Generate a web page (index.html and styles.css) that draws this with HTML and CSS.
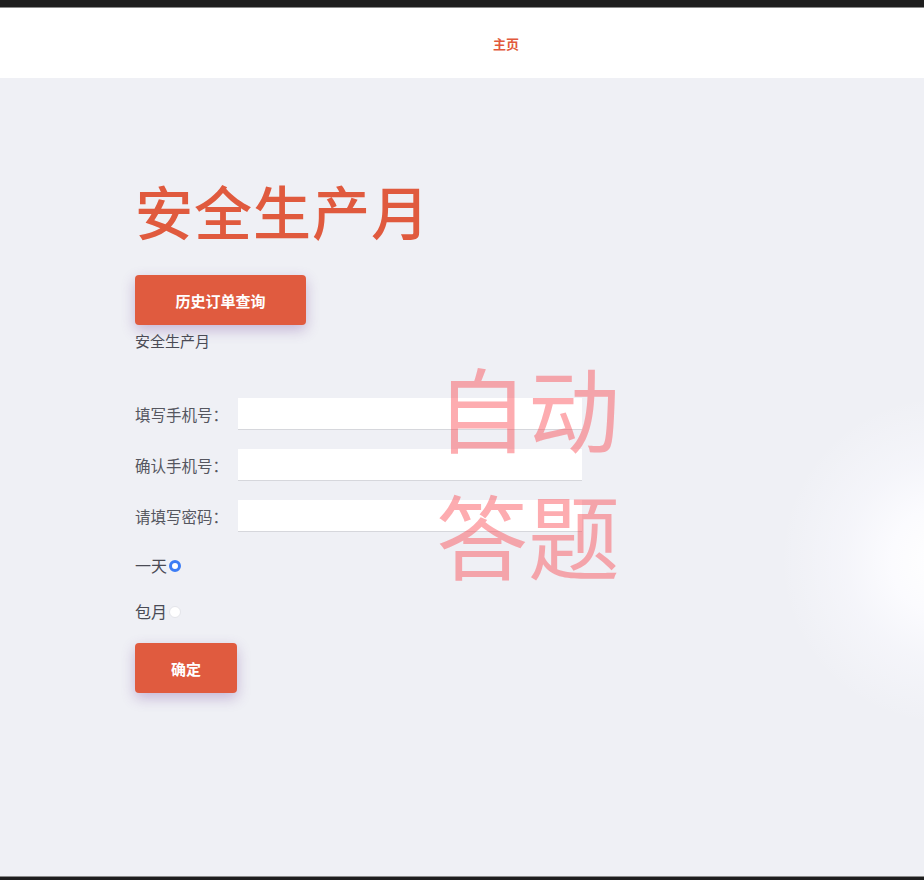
FILE: index.html
```html
<!DOCTYPE html>
<html lang="zh-CN">
<head>
<meta charset="utf-8">
<title>安全生产月</title>
<link rel="stylesheet" href="styles.css">
</head>
<body>
<div class="topbar"></div>
<header class="header">
  <a class="nav-link">主页</a>
</header>
<main class="main">
  <h1 class="title">安全生产月</h1>
  <button class="btn btn-wide">历史订单查询</button>
  <p class="subtitle">安全生产月</p>
  <form class="form">
    <div class="row">
      <label class="label">填写手机号：</label>
      <input class="input" type="text">
    </div>
    <div class="row">
      <label class="label">确认手机号：</label>
      <input class="input" type="text">
    </div>
    <div class="row">
      <label class="label">请填写密码：</label>
      <input class="input" type="password">
    </div>
    <label class="radio-row radio-first">一天<input class="radio" type="radio" name="plan" checked></label>
    <label class="radio-row">包月<input class="radio" type="radio" name="plan"></label>
    <button class="btn btn-small" type="button">确定</button>
  </form>
  <div class="overlay">自动<br>答题</div>
</main>
<div class="bottombar"></div>
</body>
</html>
```

FILE: styles.css
```css
* { box-sizing: border-box; }
html, body { margin: 0; padding: 0; }
body {
  font-family: "Noto Sans CJK SC", "Noto Sans", sans-serif;
  background: #eff0f5;
  width: 924px;
  height: 880px;
  overflow: hidden;
}
.topbar {
  height: 8px;
  background: #1e1e1e;
  border-bottom: 1px solid #8a8a8a;
}
.header {
  height: 70px;
  background: #fff;
  display: flex;
  align-items: center;
  justify-content: center;
  padding-left: 88px;
}
.nav-link {
  color: #e2593c;
  font-size: 13px;
  font-weight: 700;
}
.main {
  position: relative;
  height: 798px;
  padding: 97px 0 0 135px;
  background:
    radial-gradient(circle at 945px 482px, #ffffff 0, rgba(252,252,255,0.9) 55px, rgba(250,250,255,0.5) 100px, rgba(255,255,255,0) 165px),
    #eff0f5;
}
.title {
  margin: 0;
  font-size: 58px;
  line-height: 70px;
  font-weight: 500;
  color: #e05a3e;
  letter-spacing: 1px;
}
.btn {
  display: block;
  border: 0;
  border-radius: 4px;
  background: #e05b3f;
  color: #fff;
  font-family: inherit;
  font-size: 15px;
  font-weight: 700;
  height: 50px;
  box-shadow: 0 5px 14px rgba(110, 60, 150, 0.32);
}
.btn-wide {
  margin-top: 30px;
  width: 171px;
}
.btn-small {
  margin-top: 22px;
  width: 102px;
}
.subtitle {
  margin: 6px 0 0;
  font-size: 15px;
  line-height: 20px;
  color: #4a4b55;
}
.form {
  margin-top: 47px;
  display: flex;
  flex-direction: column;
  align-items: flex-start;
}
.row {
  display: flex;
  align-items: center;
  height: 32px;
  margin-bottom: 19px;
}
.row:last-of-type { margin-bottom: 0; }
.label {
  width: 103px;
  font-size: 15.5px;
  color: #55565f;
}
.input {
  width: 344px;
  height: 32px;
  border: 0;
  border-bottom: 1px solid #d6d7dc;
  background: #fff;
  outline: none;
}
.radio-row {
  display: flex;
  align-items: center;
  font-size: 16px;
  line-height: 20px;
  color: #4a4b55;
  margin-top: 26px;
}
.radio-first { margin-top: 23px; }
.radio {
  appearance: none;
  -webkit-appearance: none;
  margin: 0 0 0 2px;
  width: 12px;
  height: 12px;
  border-radius: 50%;
  background: #fff;
  border: 1px solid #e4e5ea;
  position: relative;
  top: 1px;
}
.radio:checked {
  background: #fff;
  border: 3.5px solid #3b7cf5;
}
.overlay {
  position: absolute;
  left: 436px;
  top: 264px;
  font-size: 92px;
  line-height: 127px;
  color: rgba(250, 70, 80, 0.45);
  pointer-events: none;
  white-space: nowrap;
}
.bottombar {
  height: 4px;
  background: #1e1e1e;
  border-top: 1px solid #8a8a8a;
}
```
